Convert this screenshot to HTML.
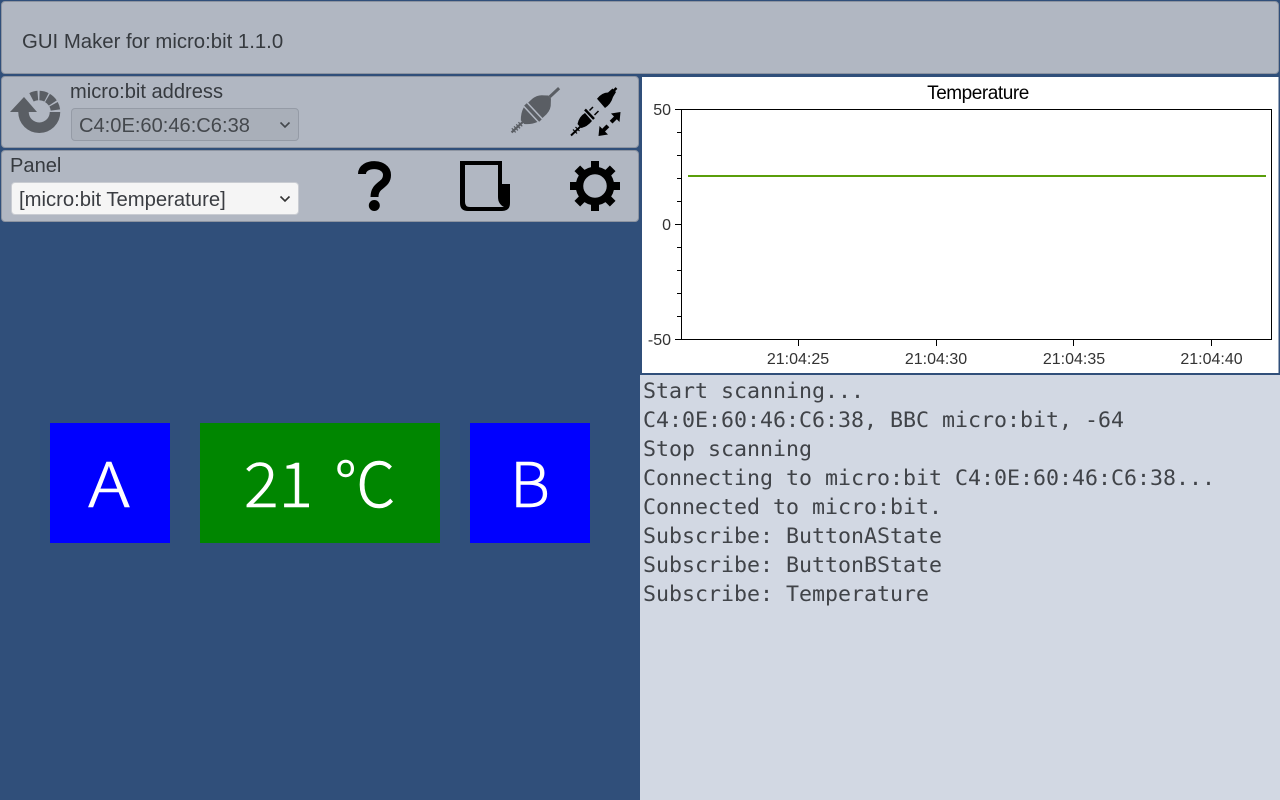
<!DOCTYPE html>
<html><head><meta charset="utf-8"><title>GUI Maker for micro:bit</title>
<style>
html,body{margin:0;padding:0;width:1280px;height:800px;overflow:hidden;background:#304f7a;font-family:"Liberation Sans",sans-serif;color:#363a3f}
.abs,.p,.sel,.btn,.t,.g{position:absolute;box-sizing:border-box}
.p{background:#b1b7c2;border:1px solid #8d94a1;border-radius:4px}
.t{font-size:20.1px;line-height:24px;white-space:pre}
.sel{height:33px;width:228px;left:71px;border-radius:4px;font-size:20.1px;line-height:35px;padding-left:7px;white-space:pre}
.sel svg{position:absolute;right:7px;top:12px}
.btn{top:423px;height:120px}
.g{color:#fff;font-family:"Noto Sans CJK JP",sans-serif;font-weight:300;-webkit-text-stroke:0.6px #fff;font-size:62px;line-height:120px;white-space:pre;top:-3px}
#log{position:absolute;left:640px;top:375px;width:640px;height:425px;background:#d2d8e3;padding:2px 0 0 3px;box-sizing:border-box;font-family:"DejaVu Sans Mono",monospace;font-size:21.6px;line-height:29px;color:#404348;white-space:pre}
</style></head><body>
<div class="p" style="left:1px;top:1px;width:1278px;height:73px"></div>
<div class="t" style="left:22px;top:30px;font-size:20.35px">GUI Maker for micro:bit 1.1.0</div>

<div class="p" style="left:1px;top:76px;width:638px;height:72px"></div>
<div class="t" style="left:70px;top:80px">micro:bit address</div>
<div class="sel" style="top:108px;background:#a9afb9;border:1px solid #959ba6;color:#44484d">C4:0E:60:46:C6:38<svg width="12" height="8" viewBox="0 0 12 8"><path d="M1.5 1.5 6 6l4.5-4.5" fill="none" stroke="#44484d" stroke-width="1.6"/></svg></div>

<div class="p" style="left:1px;top:150px;width:638px;height:72px"></div>
<div class="t" style="left:10px;top:154px">Panel</div>
<div class="sel" style="top:182px;left:11px;width:288px;background:#f5f5f5;border:1px solid #c9ccd2;color:#3a3d42;font-size:20.25px">[micro:bit Temperature]<svg width="12" height="8" viewBox="0 0 12 8"><path d="M1.5 1.5 6 6l4.5-4.5" fill="none" stroke="#333" stroke-width="1.6"/></svg></div>

<svg class="abs" style="left:0;top:0" width="640" height="225" viewBox="0 0 640 225">
  <!-- refresh -->
  <path d="M23.500 112A15.500 15.500 0 0 0 55 112" fill="none" stroke="#5a5e64" stroke-width="10.500"/>
  <path d="M10 112 24 97 37 112Z" fill="#5a5e64"/>
  <g fill="none" stroke="#5a5e64" stroke-width="9.500">
    <path d="M31.500 97.300A16.500 16.500 0 0 1 37.800 95.500"/>
    <path d="M39.500 95.500A16.500 16.500 0 0 1 46.500 97.300"/>
    <path d="M47.500 98A16.500 16.500 0 0 1 52.800 103"/>
    <path d="M53.570 104.250A16.500 16.500 0 0 1 55.440 110"/>
  </g>
  <!-- plug gray -->
  <g transform="translate(533.500 112) rotate(-43)" fill="#5a5e64" stroke="#5a5e64">
    <path d="M-30 0H-14" stroke-width="2.200" fill="none"/>
    <path d="M-27-2.800V2.800M-24-2.800V2.800M-21-2.800V2.800M-18-2.800V2.800" stroke-width="1.300" fill="none"/>
    <path d="M-15-2.500Q-10-8-4-10V10Q-10 8-15 2.500Z" stroke="none"/>
    <rect x="-2.500" y="-11" width="3.500" height="22" stroke="none"/>
    <path d="M2.500-10.500H8Q15-10 19-5L22-2V2L19 5Q15 10 8 10.500H2.500Z" stroke="none"/>
    <path d="M22 0H35" stroke-width="3" fill="none"/>
  </g>
  <!-- plug black -->
  <g fill="#000" stroke="#000">
    <path d="M571 135.500 581 126" stroke-width="2" fill="none"/>
    <path d="M573 129.500 577 133.500M575.500 127 579.500 131" stroke-width="1.200" fill="none"/>
    <path d="M577.500 124Q579 116.500 585 113L592 121Q587 127 581 128Z" stroke="none"/>
    <path d="M585 109.500 594 119" stroke-width="2.500" fill="none"/>
    <path d="M589.500 110.500 593 107M594.500 115 598.500 111" stroke-width="1.500" fill="none"/>
    <path d="M597 98.700 605 108Q611 104 613 97L616 92 612.500 88.500 608 92.500Q602 92.500 597 98.700Z" stroke="none"/>
    <path d="M612 92.500 616.500 88" stroke-width="2.500" fill="none"/>
    <g stroke="none">
      <path d="M620.500 112 619.500 122 616.800 119.300 612.500 123.500 609.700 120.700 614 116.500 611 113.500Z"/>
      <path d="M598.500 136 599.500 126 602.200 128.700 606.500 124.500 609.300 127.300 605 131.500 608 134.500Z"/>
    </g>
  </g>
  <!-- question -->
  <path d="M362 174C362 162 387 162 387 175C387 186 374.500 184 374.500 197" fill="none" stroke="#000" stroke-width="8"/>
  <circle cx="374.300" cy="205.500" r="5.500" fill="#000"/>
  <!-- document -->
  <path fill-rule="evenodd" d="M460 161H502V184H510V203Q510 211 502 211H468Q460 211 460 203ZM465 165V202Q465 207 470 207H504Q498 204 498 197V165Z" fill="#000"/>
  <!-- gear -->
  <g stroke="#000" fill="none">
    <circle cx="595" cy="186" r="15.500" stroke-width="7.500"/>
    <g stroke-width="8">
      <path d="M595 161v7M595 204v7M570 186h7M613 186h7"/>
      <path d="M577.300 168.300l5 5M607.700 198.700l5 5M612.700 168.300l-5 5M582.300 198.700l-5 5"/>
    </g>
  </g>
</svg>

<svg class="abs" style="left:640px;top:75px" width="640" height="300" viewBox="640 75 640 300">
  <rect x="641" y="76" width="638.500" height="298" fill="#fff" stroke="#304f7a" stroke-width="2"/>
  <rect x="681.500" y="109.500" width="590" height="230" fill="none" stroke="#000"/>
  <path d="M675 109.500h6M675 224.500h6M675 339.500h6M677 132.500h4M677 155.500h4M677 178.500h4M677 201.500h4M677 247.500h4M677 270.500h4M677 293.500h4M677 316.500h4M798.500 340v6M936.500 340v6M1073.500 340v6M1211.500 340v6" stroke="#000" fill="none"/>
  <path d="M688 176H1266" stroke="#5a9e0a" stroke-width="2"/>
  <text x="978" y="99" text-anchor="middle" font-family="Liberation Sans" font-size="19" letter-spacing="-0.45" fill="#000">Temperature</text>
  <g font-family="Liberation Sans" font-size="16" fill="#333">
    <g text-anchor="end"><text x="671" y="115">50</text><text x="671" y="230">0</text><text x="671" y="345">-50</text></g>
    <g text-anchor="middle"><text x="798" y="364">21:04:25</text><text x="936" y="364">21:04:30</text><text x="1074" y="364">21:04:35</text><text x="1211.500" y="364">21:04:40</text></g>
  </g>
</svg>

<div class="btn" style="left:50px;width:120px;background:#00f"><div class="g" style="left:38px;transform:scaleX(1.15);transform-origin:0 50%">A</div></div>
<div class="btn" style="left:200px;width:240px;background:#008600"><div class="g" style="left:44px;transform:scaleX(1.04);transform-origin:0 50%">21</div><div class="g" style="left:134px">℃</div></div>
<div class="btn" style="left:470px;width:120px;background:#00f"><div class="g" style="left:40px">B</div></div>

<div id="log">Start scanning...
C4:0E:60:46:C6:38, BBC micro:bit, -64
Stop scanning
Connecting to micro:bit C4:0E:60:46:C6:38...
Connected to micro:bit.
Subscribe: ButtonAState
Subscribe: ButtonBState
Subscribe: Temperature</div>
</body></html>
